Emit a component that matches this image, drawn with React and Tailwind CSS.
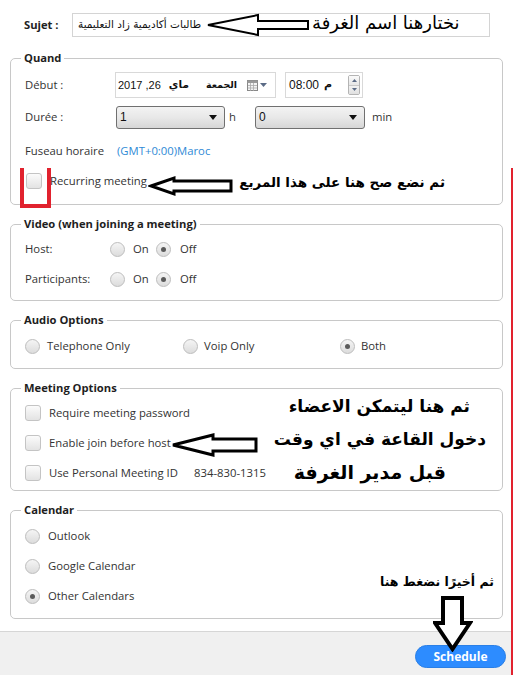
import React from "react";

function Radio({ checked }) {
  return (
    <span className="w-[15px] h-[15px] rounded-full border border-[#bdbdbd] bg-linear-to-b from-[#f5f5f5] to-[#dcdcdc] flex items-center justify-center shrink-0">
      {checked && <span className="w-[5px] h-[5px] rounded-full bg-[#5a5a5a]" />}
    </span>
  );
}

function Check() {
  return (
    <span className="block w-[16px] h-[16px] rounded-[3px] border border-[#c4c4c4] bg-linear-to-b from-[#fbfbfb] to-[#e3e3e3] shrink-0" />
  );
}

function Group({ title, children }) {
  return (
    <fieldset className="mx-[10px] mt-[12px] border border-[#c8c8c8] rounded-[5px] min-w-0">
      <legend className="ml-[10px] px-[3px] text-[11.2px] leading-[14px] font-bold text-[#1e1e1e]">
        {title}
      </legend>
      {children}
    </fieldset>
  );
}

function Select({ value, w }) {
  return (
    <div
      className={`${w} h-[23px] rounded-[3px] border border-[#707070] bg-linear-to-b from-[#f3f3f3] via-[#e8e8e8] to-[#d6d6d6] flex items-center justify-between pl-[3px] pr-[7px] text-[12px] text-[#111] font-['Liberation_Sans',sans-serif]`}
    >
      <span>{value}</span>
      <svg width="8" height="5" viewBox="0 0 8 5">
        <polygon points="0,0 8,0 4,5" fill="#111" />
      </svg>
    </div>
  );
}

function ArrowLeft({ className, w, h, head, sy1, sy2, sw }) {
  return (
    <svg className={className} width={w} height={h} viewBox={`0 0 ${w} ${h}`}>
      <polygon
        points={`${sw},${h / 2} ${head},${sw} ${head},${sy1} ${w - sw},${sy1} ${w - sw},${sy2} ${head},${sy2} ${head},${h - sw}`}
        fill="white"
        stroke="black"
        strokeWidth={sw}
        strokeLinejoin="miter"
      />
    </svg>
  );
}

export default function App() {
  return (
    <div className="relative w-[513px] h-[675px] overflow-hidden bg-white flex flex-col font-['Open_Sans',sans-serif] text-[11.3px] text-[#333]">
      {/* Sujet */}
      <div className="flex items-center pt-[13px] pl-[24px]">
        <span className="w-[48px] font-bold text-[#222] text-[11.2px]">Sujet :</span>
        <div className="w-[418px] h-[24px] border border-[#d4d4d4] flex items-center pl-[5px]">
          <span dir="rtl" className="font-['DejaVu_Sans',sans-serif] text-[10.5px] text-[#111]">
            طالبات أكاديمية زاد التعليمية
          </span>
        </div>
      </div>

      <div className="mt-[2px]" />

      {/* Quand */}
      <Group title="Quand">
        <div className="pl-[14px] pt-[7px] pb-[15px] flex flex-col">
          <div className="h-[26px] flex items-center">
            <span className="w-[90px]">Début :</span>
            <div className="w-[161px] h-[26px] border border-[#d9d9d9] flex items-center pl-[2px] pr-[8px] text-[#111]">
              <span className="font-['Liberation_Sans',sans-serif] text-[11px]">2017 ,26</span>
              <span dir="rtl" className="ml-[8px] font-['DejaVu_Sans',sans-serif] text-[10.5px] font-bold">ماي</span>
              <span dir="rtl" className="ml-[17px] font-['DejaVu_Sans',sans-serif] text-[9.5px] font-bold">الجمعة</span>
              <span className="ml-auto flex items-center gap-[2px]">
                <svg width="11" height="11" viewBox="0 0 11 11">
                  <rect x="0.5" y="0.5" width="10" height="10" fill="#f4f4f4" stroke="#888" />
                  <rect x="0.5" y="0.5" width="10" height="2.5" fill="#9a9a9a" />
                  <path d="M3.5 3v8M6.5 3v8M1 5.5h9M1 8h9" stroke="#aaa" strokeWidth="0.8" />
                </svg>
                <svg width="7" height="4" viewBox="0 0 7 4">
                  <polygon points="0,0 7,0 3.5,4" fill="#5b6b86" />
                </svg>
              </span>
            </div>
            <div className="ml-[9px] w-[78px] h-[26px] border border-[#d9d9d9] flex items-center pl-[3px] pr-[1px] text-[#111]">
              <span className="font-['Liberation_Sans',sans-serif] text-[12px]">08:00</span>
              <span className="ml-[5px] font-['DejaVu_Sans',sans-serif] text-[11px] font-bold">م</span>
              <div className="ml-auto mr-[1px] w-[12px] h-[20px] flex flex-col border border-[#b4b4b4] rounded-[2px]">
                <div className="flex-1 bg-linear-to-b from-[#fafafa] to-[#e6e6e6] border-b border-[#c8c8c8] flex items-center justify-center">
                  <svg width="5" height="3" viewBox="0 0 5 3"><polygon points="0,3 5,3 2.5,0" fill="#5b6b86" /></svg>
                </div>
                <div className="flex-1 bg-linear-to-b from-[#f2f2f2] to-[#e0e0e0] flex items-center justify-center">
                  <svg width="5" height="3" viewBox="0 0 5 3"><polygon points="0,0 5,0 2.5,3" fill="#5b6b86" /></svg>
                </div>
              </div>
            </div>
          </div>
          <div className="mt-[8px] h-[22px] flex items-center">
            <span className="w-[91px]">Durée :</span>
            <Select value="1" w="w-[109px]" />
            <span className="ml-[4px] w-[26px]">h</span>
            <Select value="0" w="w-[110px]" />
            <span className="ml-[7px]">min</span>
          </div>
          <div className="mt-[15px] h-[16px] flex items-center">
            <span className="w-[92px]">Fuseau horaire</span>
            <span className="text-[#2f8ad6]">(GMT+0:00)Maroc</span>
          </div>
          <div className="mt-[14px] h-[16px] flex items-center">
            <span className="ml-[1px]"><Check /></span>
            <span className="ml-[8px]">Recurring meeting</span>
          </div>
        </div>
      </Group>

      {/* Video */}
      <Group title="Video (when joining a meeting)">
        <div className="pl-[14px] pt-[8px] pb-[11px] flex flex-col gap-[10px]">
          {["Host:", "Participants:"].map((l) => (
            <div key={l} className="h-[20px] flex items-center">
              <span className="w-[85px]">{l}</span>
              <span className="w-[46px] flex items-center gap-[8px]"><Radio /><span>On</span></span>
              <span className="flex items-center gap-[9px]"><Radio checked /><span>Off</span></span>
            </div>
          ))}
        </div>
      </Group>

      {/* Audio */}
      <Group title="Audio Options">
        <div className="pl-[14px] pt-[9px] pb-[12px] flex">
          <div className="h-[20px] w-[158px] flex items-center gap-[7px]"><Radio /><span>Telephone Only</span></div>
          <div className="h-[20px] w-[157px] flex items-center gap-[6px]"><Radio /><span>Voip Only</span></div>
          <div className="h-[20px] flex items-center gap-[6px]"><Radio checked /><span>Both</span></div>
        </div>
      </Group>

      {/* Meeting Options */}
      <Group title="Meeting Options">
        <div className="pl-[14px] pt-[8px] pb-[7px] flex flex-col gap-[10px]">
          <div className="h-[20px] flex items-center gap-[8px]"><Check /><span>Require meeting password</span></div>
          <div className="h-[20px] flex items-center gap-[8px]"><Check /><span>Enable join before host</span></div>
          <div className="h-[20px] flex items-center gap-[8px]">
            <Check />
            <span className="w-[137px]">Use Personal Meeting ID</span>
            <span>834-830-1315</span>
          </div>
        </div>
      </Group>

      {/* Calendar */}
      <Group title="Calendar">
        <div className="pl-[14px] pt-[9px] pb-[12px] flex flex-col gap-[10px]">
          <div className="h-[20px] flex items-center gap-[8px]"><Radio /><span>Outlook</span></div>
          <div className="h-[20px] flex items-center gap-[8px]"><Radio /><span>Google Calendar</span></div>
          <div className="h-[20px] flex items-center gap-[8px]"><Radio checked /><span>Other Calendars</span></div>
        </div>
      </Group>

      {/* Footer */}
      <div className="mt-[12px] flex-1 border-t border-[#d6d6d6] bg-[#f0f0f0] flex justify-end items-start pt-[13px] pr-[7px]">
        <button className="w-[91px] h-[23px] rounded-full bg-[#2d8cff] border border-[#2a7fe6] text-white font-bold text-[12px] leading-none">
          Schedule
        </button>
      </div>

      {/* Annotations */}
      <span dir="rtl" className="absolute left-[312px] top-[9px] font-['DejaVu_Sans',sans-serif] text-[18px] text-black whitespace-nowrap">
        نختارهنا اسم الغرفة
      </span>
      <ArrowLeft className="absolute left-[206px] top-[13px]" w={104} h={24} head={52} sy1={8} sy2={16} sw={2} />

      <span dir="rtl" className="absolute right-[68px] top-[172px] font-['DejaVu_Sans',sans-serif] font-bold text-[13.5px] text-black whitespace-nowrap">
        ثم نضع صح هنا على هذا المربع
      </span>
      <ArrowLeft className="absolute left-[148px] top-[175px]" w={86} h={22} head={26} sy1={6} sy2={16} sw={3} />

      <div dir="rtl" className="absolute left-[276px] top-[393px] w-[210px] flex flex-col items-start gap-[7px] font-['DejaVu_Sans',sans-serif] font-bold text-[17px] leading-[26px] text-black whitespace-nowrap">
        <span className="mr-[16px]">ثم هنا ليتمكن الاعضاء</span>
        <span>دخول القاعة في اي وقت</span>
        <span className="mr-[40px] text-[19px]">قبل مدير الغرفة</span>
      </div>
      <ArrowLeft className="absolute left-[170px] top-[432px]" w={89} h={26} head={43} sy1={7} sy2={19} sw={3} />

      <span dir="rtl" className="absolute left-[380px] top-[573px] font-['DejaVu_Sans',sans-serif] font-bold text-[12.5px] text-black whitespace-nowrap">
        ثم أخيرًا نضغط هنا
      </span>
      <svg className="absolute left-[433px] top-[596px]" width="40" height="56" viewBox="0 0 40 56">
        <polygon points="10,2 29,2 29,27 37,27 19.5,53 2,27 10,27" fill="white" stroke="black" strokeWidth="4" strokeLinejoin="miter" />
      </svg>

      {/* red marks */}
      <div className="absolute left-[20px] top-[168px] w-[31px] h-[40px] border-l-[4px] border-r-[4px] border-b-[4px] border-[#e1222e]" />
      <div className="absolute left-[511px] top-[168px] w-[2px] bottom-0 bg-[#e1222e]" />
    </div>
  );
}
